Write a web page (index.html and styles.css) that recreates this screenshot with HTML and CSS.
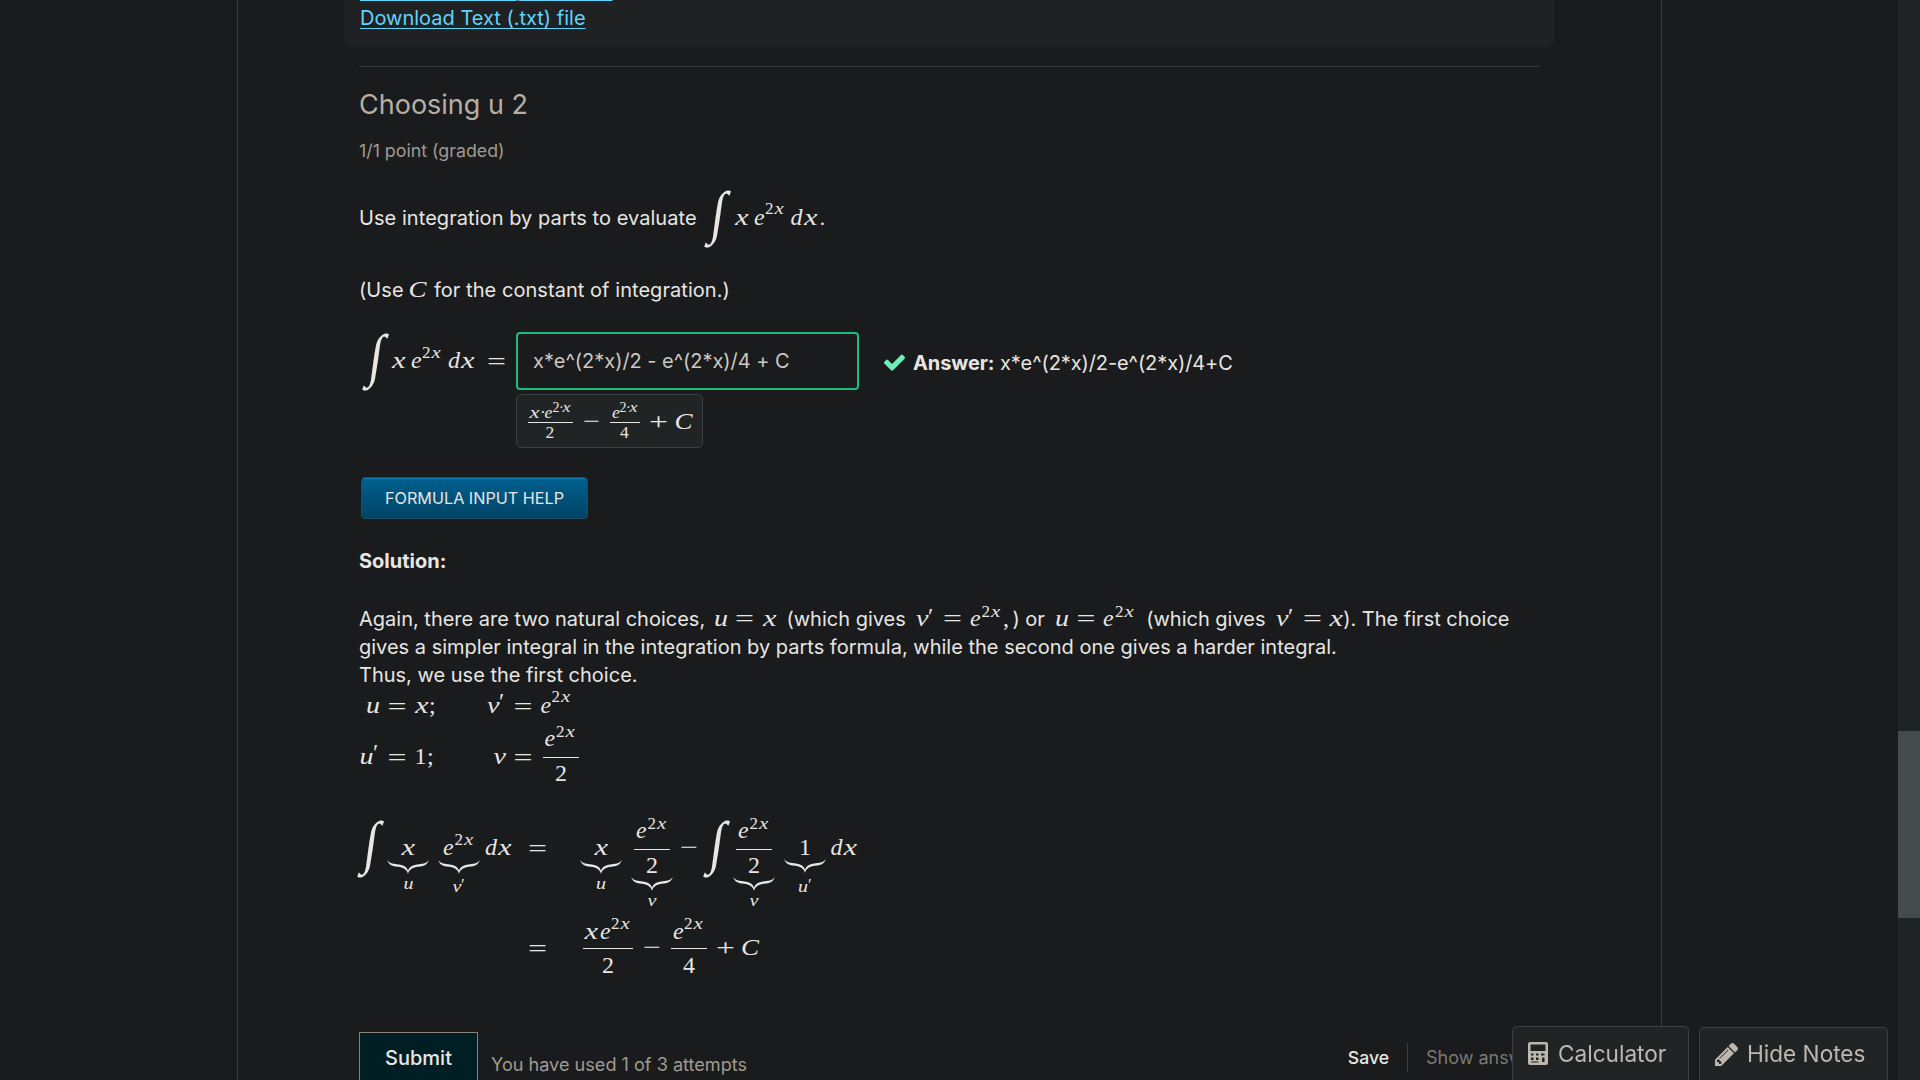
FILE: index.html
```html
<!DOCTYPE html>
<html lang="en">
<head>
<meta charset="utf-8">
<title>Choosing u 2</title>
<link rel="stylesheet" href="styles.css">
</head>
<body>
<div class="page">
<main class="column">
  <section class="downloads">
    <a href="#">Download SubRip (.srt) file</a>
    <a href="#">Download Text (.txt) file</a>
  </section>
  <hr class="rule">
  <h3 class="title">Choosing u 2</h3>
  <div class="progress">1/1 point (graded)</div>

  <p class="prompt">Use integration by parts to evaluate <svg class="math" width="117" viewBox="703 -40 117 70"><text class="int" transform="translate(710 7) skewX(-8) scale(1 1.163)">∫</text><text x="736" textLength="13.5" lengthAdjust="spacingAndGlyphs">x</text><text x="755">e</text><text class="sup up" x="766" y="-11">2</text><text class="sup" x="775.5" y="-11" textLength="9.3" lengthAdjust="spacingAndGlyphs">x</text><text x="791.5">d</text><text x="805" textLength="13.5" lengthAdjust="spacingAndGlyphs">x</text></svg>.</p>
  <p class="note">(Use <svg class="math" width="19" viewBox="409 -40 19 70"><text x="408.5" textLength="18" lengthAdjust="spacingAndGlyphs">C</text></svg> for the constant of integration.)</p>

  <div class="equation">
    <svg class="lhs" width="157" height="70" viewBox="359 -40 157 70"><text class="int" transform="translate(367 7) skewX(-8) scale(1 1.163)">∫</text><text x="392" textLength="13.5" lengthAdjust="spacingAndGlyphs">x</text><text x="411">e</text><text class="sup up" x="422" y="-10.5">2</text><text class="sup" x="431.5" y="-10.5" textLength="9.3" lengthAdjust="spacingAndGlyphs">x</text><text x="448">d</text><text x="461" textLength="13.5" lengthAdjust="spacingAndGlyphs">x</text><text class="up" x="487" y="0.5" textLength="19" lengthAdjust="spacingAndGlyphs">=</text></svg>
    <div class="entry">
      <div class="field">x*e^(2*x)/2 - e^(2*x)/4 + C</div>
      <div class="preview"><svg width="185" height="52" viewBox="517 395 185 52"><g class="mid"><text x="529.5" y="418" textLength="10" lengthAdjust="spacingAndGlyphs">x</text><text class="up" x="540" y="418">·</text><text x="544.5" y="418">e</text><text class="up" x="545.5" y="438">2</text><text x="612" y="418">e</text><text class="up" x="620" y="438">4</text></g><g class="tiny"><text class="up" x="552.5" y="411.5">2</text><text class="up" x="559" y="411.5">·</text><text x="562.5" y="411.5" textLength="8" lengthAdjust="spacingAndGlyphs">x</text><text class="up" x="619.5" y="411.5">2</text><text class="up" x="626" y="411.5">·</text><text x="629.5" y="411.5" textLength="8" lengthAdjust="spacingAndGlyphs">x</text></g><rect x="528" y="422" width="45" height="1"/><rect x="610" y="422" width="30" height="1"/><text class="up" x="583" y="429" textLength="17" lengthAdjust="spacingAndGlyphs">−</text><text class="up" x="649" y="429" textLength="19" lengthAdjust="spacingAndGlyphs">+</text><text x="674.5" y="428.5" textLength="18" lengthAdjust="spacingAndGlyphs">C</text></svg></div>
    </div>
    <div class="answer">
      <svg class="check" width="21" height="17" viewBox="121 310 1550 1212"><path d="M1671 566q0 40-28 68l-724 724-136 136q-28 28-68 28t-68-28l-136-136-362-362q-28-28-28-68t28-68l136-136q28-28 68-28t68 28l294 295 656-657q28-28 68-28t68 28l136 136q28 28 28 68z"/></svg>
      <span><b>Answer:</b> x*e^(2*x)/2-e^(2*x)/4+C</span>
    </div>
  </div>

  <button class="help">FORMULA INPUT HELP</button>

  <p class="solution"><b>Solution:</b></p>
  <p class="text">Again, there are two natural choices, <svg class="math" width="67" viewBox="715 -40 67 70"><text x="715" textLength="14" lengthAdjust="spacingAndGlyphs">u</text><text class="up" x="736" textLength="19" lengthAdjust="spacingAndGlyphs">=</text><text x="764" textLength="13.5" lengthAdjust="spacingAndGlyphs">x</text></svg> (which gives <svg class="math" width="98" viewBox="914 -40 98 70"><text x="916" textLength="12.5" lengthAdjust="spacingAndGlyphs">v</text><text class="up" x="928" y="-2">′</text><text class="up" x="943" textLength="19" lengthAdjust="spacingAndGlyphs">=</text><text x="970">e</text><text class="sup up" x="981.5" y="-9">2</text><text class="sup" x="991" y="-9" textLength="9.3" lengthAdjust="spacingAndGlyphs">x</text><text class="up" x="1003">,</text></svg>) or <svg class="math" width="87" viewBox="1055 -40 87 70"><text x="1056" textLength="14" lengthAdjust="spacingAndGlyphs">u</text><text class="up" x="1077.5" textLength="19" lengthAdjust="spacingAndGlyphs">=</text><text x="1104">e</text><text class="sup up" x="1116" y="-9">2</text><text class="sup" x="1125.5" y="-9" textLength="9.3" lengthAdjust="spacingAndGlyphs">x</text></svg> (which gives <svg class="math" width="69" viewBox="1274 -40 69 70"><text x="1276" textLength="12.5" lengthAdjust="spacingAndGlyphs">v</text><text class="up" x="1288" y="-2">′</text><text class="up" x="1303" textLength="19" lengthAdjust="spacingAndGlyphs">=</text><text x="1329.5" textLength="13.5" lengthAdjust="spacingAndGlyphs">x</text></svg>). The first choice<br>gives a simpler integral in the integration by parts formula, while the second one gives a harder integral.<br>Thus, we use the first choice.</p>

  <svg class="block-math" width="560" height="300" viewBox="359 689 560 300">
    <g>
      <text x="366" y="713" textLength="14" lengthAdjust="spacingAndGlyphs">u</text><text class="up" x="387.5" y="713.5" textLength="19" lengthAdjust="spacingAndGlyphs">=</text><text x="415" y="713" textLength="13.5" lengthAdjust="spacingAndGlyphs">x</text><text class="up" x="429" y="713">;</text>
      <text x="487" y="713" textLength="12.5" lengthAdjust="spacingAndGlyphs">v</text><text class="up" x="499" y="709">′</text><text class="up" x="513.5" y="713.5" textLength="19" lengthAdjust="spacingAndGlyphs">=</text><text x="540.5" y="713">e</text><text class="sup up" x="551.5" y="702">2</text><text class="sup" x="561" y="702" textLength="9.3" lengthAdjust="spacingAndGlyphs">x</text>
    </g>
    <g>
      <text x="359.5" y="764" textLength="14" lengthAdjust="spacingAndGlyphs">u</text><text class="up" x="373" y="760">′</text><text class="up" x="387.5" y="764.5" textLength="19" lengthAdjust="spacingAndGlyphs">=</text><text class="up" x="414.5" y="764">1</text><text class="up" x="427" y="764">;</text>
      <text x="493.5" y="764" textLength="12.5" lengthAdjust="spacingAndGlyphs">v</text><text class="up" x="513.5" y="764.5" textLength="19" lengthAdjust="spacingAndGlyphs">=</text><text x="544.5" y="746">e</text><text class="sup up" x="556" y="737">2</text><text class="sup" x="565.5" y="737" textLength="9.3" lengthAdjust="spacingAndGlyphs">x</text><rect x="543" y="757" width="36" height="1"/><text class="up" x="555" y="781">2</text>
    </g>
    <g>
      <text class="int" transform="translate(362 862) skewX(-8) scale(1 1.163)">∫</text>
      <text x="401.5" y="855" textLength="13.5" lengthAdjust="spacingAndGlyphs">x</text><path class="brace" transform="translate(387 860)" d="M0 0C3 7 7 6 13 7C17 8 20 10 21 14C22 10 25 8 29 7C35 6 39 7 42 0C39 4 35 3.8 30 4.5C25 5 22 7 21 10.5C20 7 17 5 12 4.5C7 3.8 3 4 0 0Z"/><text class="sup" x="403.500" y="889" textLength="10" lengthAdjust="spacingAndGlyphs">u</text>
      <text x="443" y="855">e</text><text class="sup up" x="454.5" y="845">2</text><text class="sup" x="464" y="845" textLength="9.3" lengthAdjust="spacingAndGlyphs">x</text><path class="brace" transform="translate(438 860)" d="M0 0C3 7 7 6 13 7C17 8 20 10 21 14C22 10 25 8 29 7C35 6 39 7 42 0C39 4 35 3.8 30 4.5C25 5 22 7 21 10.5C20 7 17 5 12 4.5C7 3.8 3 4 0 0Z"/><text class="sup" x="452.5" y="892" textLength="9" lengthAdjust="spacingAndGlyphs">v</text><text class="sup up" x="461" y="890">′</text>
      <text x="485" y="855">d</text><text x="498" y="855" textLength="13.5" lengthAdjust="spacingAndGlyphs">x</text><text class="up" x="528" y="855.5" textLength="19" lengthAdjust="spacingAndGlyphs">=</text>
      <text x="594.5" y="855" textLength="13.5" lengthAdjust="spacingAndGlyphs">x</text><path class="brace" transform="translate(580 860)" d="M0 0C3 7 7 6 13 7C17 8 20 10 21 14C22 10 25 8 29 7C35 6 39 7 42 0C39 4 35 3.8 30 4.5C25 5 22 7 21 10.5C20 7 17 5 12 4.5C7 3.8 3 4 0 0Z"/><text class="sup" x="596" y="889" textLength="10" lengthAdjust="spacingAndGlyphs">u</text>
      <text x="636" y="838">e</text><text class="sup up" x="647.5" y="829">2</text><text class="sup" x="657" y="829" textLength="9.3" lengthAdjust="spacingAndGlyphs">x</text><rect x="634" y="849" width="36" height="1"/><text class="up" x="646" y="873">2</text><path class="brace" transform="translate(631 877)" d="M0 0C3 7 7 6 13 7C17 8 20 10 21 14C22 10 25 8 29 7C35 6 39 7 42 0C39 4 35 3.8 30 4.5C25 5 22 7 21 10.5C20 7 17 5 12 4.5C7 3.8 3 4 0 0Z"/><text class="sup" x="647.5" y="906" textLength="9" lengthAdjust="spacingAndGlyphs">v</text>
      <text class="up" x="680" y="855" textLength="18" lengthAdjust="spacingAndGlyphs">−</text>
      <text class="int" transform="translate(708 862) skewX(-8) scale(1 1.163)">∫</text>
      <text x="738" y="838">e</text><text class="sup up" x="749.5" y="829">2</text><text class="sup" x="759" y="829" textLength="9.3" lengthAdjust="spacingAndGlyphs">x</text><rect x="736" y="849" width="36" height="1"/><text class="up" x="748" y="873">2</text><path class="brace" transform="translate(733 877)" d="M0 0C3 7 7 6 13 7C17 8 20 10 21 14C22 10 25 8 29 7C35 6 39 7 42 0C39 4 35 3.8 30 4.5C25 5 22 7 21 10.5C20 7 17 5 12 4.5C7 3.8 3 4 0 0Z"/><text class="sup" x="749.5" y="906" textLength="9" lengthAdjust="spacingAndGlyphs">v</text>
      <text class="up" x="799" y="855">1</text><path class="brace" transform="translate(784 859)" d="M0 0C3 7 7 6 13 7C17 8 20 10 21 14C22 10 25 8 29 7C35 6 39 7 42 0C39 4 35 3.8 30 4.5C25 5 22 7 21 10.5C20 7 17 5 12 4.5C7 3.8 3 4 0 0Z"/><text class="sup" x="798" y="892" textLength="10" lengthAdjust="spacingAndGlyphs">u</text><text class="sup up" x="808" y="890">′</text>
      <text x="830.5" y="855">d</text><text x="843.5" y="855" textLength="13.5" lengthAdjust="spacingAndGlyphs">x</text>
    </g>
    <g>
      <text class="up" x="528" y="955.5" textLength="19" lengthAdjust="spacingAndGlyphs">=</text>
      <text x="584.5" y="938.500" textLength="13.5" lengthAdjust="spacingAndGlyphs">x</text><text x="600" y="938.500">e</text><text class="sup up" x="611" y="929">2</text><text class="sup" x="620.5" y="929" textLength="9.3" lengthAdjust="spacingAndGlyphs">x</text><rect x="583" y="948" width="50" height="1"/><text class="up" x="602" y="973">2</text>
      <text class="up" x="643" y="955" textLength="18" lengthAdjust="spacingAndGlyphs">−</text>
      <text x="673" y="938.500">e</text><text class="sup up" x="684" y="929">2</text><text class="sup" x="693.5" y="929" textLength="9.3" lengthAdjust="spacingAndGlyphs">x</text><rect x="671" y="948" width="36" height="1"/><text class="up" x="683" y="973">4</text>
      <text class="up" x="716" y="955" textLength="19" lengthAdjust="spacingAndGlyphs">+</text><text x="741" y="955" textLength="18" lengthAdjust="spacingAndGlyphs">C</text>
    </g>
  </svg>

  <div class="actions">
    <button class="submit">Submit</button>
    <span class="attempts">You have used 1 of 3 attempts</span>
    <span class="save">Save</span>
    <span class="show">Show answer</span>
  </div>
</main>
<div class="scroll"><div class="thumb"></div></div>
</div>

<div class="tools">
  <div class="tool calc"><svg width="20" height="23" viewBox="0 0 20 23"><path fill-rule="evenodd" d="M2 0H18Q20 0 20 2V21Q20 23 18 23H2Q0 23 0 21V2Q0 0 2 0ZM2.5 2.5V9H17.5V2.5ZM3 11.5V13.5H5.5V11.5ZM8 11.5V13.5H10.5V11.5ZM13 11.5V13.5H16.5V11.5ZM3 15.5V18H5.5V15.5ZM8 15.5V18H10.5V15.5ZM14 15.5V20H16.5V15.5ZM3 19.5V20.5H10.5V19.5Z"/></svg><span>Calculator</span></div>
  <div class="tool notes"><svg width="23" height="23" viewBox="0 149 1515 1515"><path d="M363 1536l91-91-235-235-91 91v107h128v128h107zM886 608q0-22-22-22-10 0-17 7l-542 542q-7 7-7 17 0 22 22 22 10 0 17-7l542-542q7-7 7-17zM832 416l416 416-832 832h-416v-416zM1515 512q0 53-37 90l-166 166-416-416 166-165q36-38 90-38 53 0 91 38l235 234q37 39 37 91z"/></svg><span>Hide Notes</span></div>
</div>
</body>
</html>
```
FILE: styles.css
```css
* { box-sizing: border-box; }
html, body { height: 100%; margin: 0; overflow: hidden; }
body {
  background: #1a1b1c;
  color: #e8e6e3;
  font: 20px/28px Inter, "Liberation Sans", sans-serif;
}
p, h3 { margin: 0; flex: none; }
.page { display: flex; height: 1080px; }
.column {
  display: flex;
  flex-direction: column;
  width: 1425px;
  margin-left: 237px;
  padding: 0 122px 0 121px;
  border-left: 1px solid #3a3d3e;
  border-right: 1px solid #3a3d3e;
}
.downloads {
  display: flex;
  flex: none;
  flex-direction: column;
  justify-content: flex-end;
  align-items: flex-start;
  height: 47px;
  margin: 0 -15px;
  padding: 0 16px 15px;
  overflow: hidden;
  border-radius: 0 0 8px 8px;
  background: #202122;
}
.downloads a {
  color: #5fd5fc;
  text-decoration: underline 1px;
  text-underline-offset: 3px;
}
.rule {
  flex: none;
  width: 1180px;
  height: 1px;
  margin: 19px 0 17px;
  border: 0;
  background: #3a3b3d;
}
.title { height: 40px; color: #b5afa5; font-size: 27px; font-weight: 400; line-height: 41px; }
.progress { flex: none; height: 25px; margin-top: 14px; color: #a09a8e; font-size: 17.8px; line-height: 25px; }
.prompt { height: 28px; margin-top: 41px; letter-spacing: 0.06px; white-space: nowrap; }
.note { height: 28px; margin-top: 44px; letter-spacing: 0.05px; white-space: nowrap; }

svg { flex: none; fill: #e8e6e3; }
svg text { font: italic 24px "Liberation Serif", serif; letter-spacing: 0; }
svg .up { font-style: normal; }
svg .sup { font-size: 17px; }
svg .mid text { font-size: 17.5px; }
svg .tiny text { font-size: 14px; }
svg .int { font-size: 50px; font-style: normal; }
.math { display: inline-block; height: 70px; margin: -30px 0; overflow: visible; }

.equation { display: flex; flex: none; height: 116px; margin-top: 28px; }
.lhs { margin-top: -4px; overflow: visible; }
.entry { flex: none; width: 343px; }
.field {
  height: 58px;
  padding: 0 15px;
  border: 2px solid #16c079;
  border-radius: 4px;
  color: #cdc8c0;
  letter-spacing: -0.04px;
  line-height: 54px;
}
.preview {
  display: flex;
  width: 187px;
  height: 54px;
  margin-top: 4px;
  border: 1px solid #3b4042;
  border-radius: 5px;
  background: #202425;
}
.answer { display: flex; margin: 17px 0 0 25px; letter-spacing: -0.1px; white-space: nowrap; }
.check { margin: 5px 8px 0 0; fill: #6cf0b8; }

.help {
  flex: none;
  width: 227px;
  height: 42px;
  margin: 29px 0 0 2px;
  padding: 0;
  border: 1px solid #1c4d68;
  border-radius: 4px;
  background: linear-gradient(#006090, #004466);
  box-shadow: inset 0 1px #0a7fba;
  color: #e8e6e3;
  font: 16.2px Inter, sans-serif;
}
.solution { height: 28px; margin-top: 28px; }
.text { height: 84px; margin-top: 30px; white-space: nowrap; }
.text .math { margin-left: 3px; }
.block-math { display: block; overflow: visible; }

.actions { display: flex; flex: none; height: 48px; margin-top: 43px; white-space: nowrap; }
.submit {
  width: 119px;
  height: 52px;
  border: 1px solid #8c8373;
  background: #001f24;
  color: #e8e6e3;
  font: 500 20px Inter, sans-serif;
}
.attempts { margin: 18px 0 0 13px; color: #a09a8e; font-size: 18.1px; }
.save {
  height: 29px;
  margin: 11px 0 0 auto;
  padding-right: 18px;
  border-right: 1px solid #3a3d3e;
  font-size: 17.6px;
  font-weight: 500;
  line-height: 30px;
}
.show { width: 113px; margin: 12px 0 0 18px; color: #7d7a75; font-size: 18px; }

.scroll { width: 22px; margin-left: auto; background: #202324; }
.thumb { height: 187px; margin-top: 731px; background: #454a4c; }

.tools { position: fixed; right: 32px; bottom: 0; display: flex; align-items: flex-end; gap: 10px; }
.tool {
  display: flex;
  height: 53px;
  padding: 15px 0 0 15px;
  border: 1px solid #3c4042;
  border-bottom: 0;
  border-radius: 5px 5px 0 0;
  background: #202425;
  color: #bdb7ae;
  font-size: 22.6px;
  line-height: 24px;
}
.tool svg { fill: #bdb7ae; }
.calc { width: 177px; height: 54px; gap: 10px; }
.notes { width: 189px; gap: 9px; }
.notes span { margin-top: -1px; }
```
